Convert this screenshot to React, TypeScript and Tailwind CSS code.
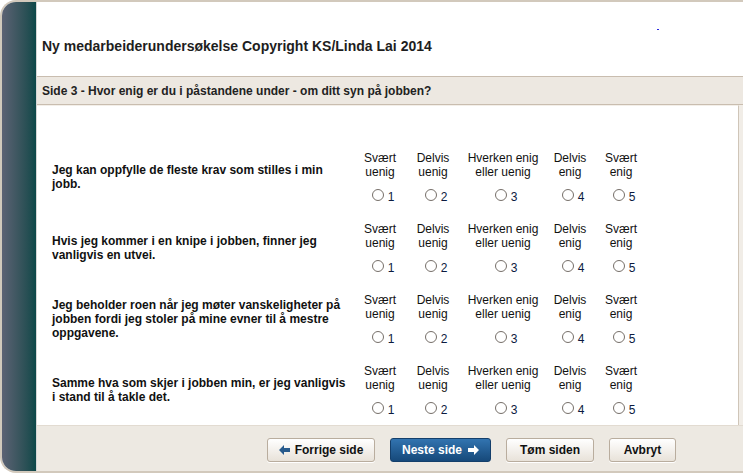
import React from 'react'

const questions = [
  'Jeg kan oppfylle de fleste krav som stilles i min jobb.',
  'Hvis jeg kommer i en knipe i jobben, finner jeg vanligvis en utvei.',
  'Jeg beholder roen når jeg møter vanskeligheter på jobben fordi jeg stoler på mine evner til å mestre oppgavene.',
  'Samme hva som skjer i jobben min, er jeg vanligvis i stand til å takle det.',
]

const options = [
  { top: 'Svært', bottom: 'uenig', w: 'w-[54px]' },
  { top: 'Delvis', bottom: 'uenig', w: 'w-[52px]' },
  { top: 'Hverken enig', bottom: 'eller uenig', w: 'w-[88px]' },
  { top: 'Delvis', bottom: 'enig', w: 'w-[46px]' },
  { top: 'Svært', bottom: 'enig', w: 'w-[56px]' },
]

function Arrow({ dir, color }: { dir: 'left' | 'right'; color: string }) {
  return (
    <svg width="11" height="10" viewBox="0 0 11 10" className={dir === 'right' ? 'rotate-180' : ''}>
      <path d="M0 5 L5 0 L5 3 L11 3 L11 7 L5 7 L5 10 Z" fill={color} />
    </svg>
  )
}

function LightButton({ children, w }: { children: React.ReactNode; w: string }) {
  return (
    <button className={`${w} h-[24px] flex items-center justify-center gap-[5px] rounded-[3px] border border-[#b9ad9e] bg-linear-to-b from-white to-[#e8e2d9] text-[12px] font-bold text-[#111] shadow-[0_1px_0_#fff]`}>
      {children}
    </button>
  )
}

export default function App() {
  return (
    <div className="w-[743px] h-[476px] bg-white overflow-hidden font-['Liberation_Sans',Arial,sans-serif]">
      <div className="flex h-[473px] border-t-2 border-b-2 border-l-2 border-[#d2c9bc] rounded-l-[16px] overflow-hidden">
        {/* left strip */}
        <div className="w-[35px] shrink-0 bg-linear-to-r from-[#5c6274] to-[#0b4849] border-r border-[#d6d6d6]" />

        <div className="flex-1 flex flex-col min-w-0">
          {/* header */}
          <div className="relative h-[74px] bg-white pl-[5px] pt-[35px]">
            <h1 className="text-[14px] leading-[18px] font-bold text-[#1e1e1e]">
              Ny medarbeiderundersøkelse Copyright KS/Linda Lai 2014
            </h1>
            <span className="absolute left-[620px] top-[27px] w-[2px] h-[1px] bg-[#2a2ae0]" />
          </div>

          {/* section bar */}
          <div className="h-[29px] flex items-center pl-[5px] bg-[#ede8e1] border-y border-[#c9bdaf]">
            <span className="text-[12px] font-bold text-[#222]">
              Side 3 - Hvor enig er du i påstandene under - om ditt syn på jobben?
            </span>
          </div>

          {/* content */}
          <div className="h-[320px] flex bg-[#f1ede7]">
            <div className="flex-1 bg-white border-r border-[#cfc5b8] mr-[4px] pt-[45px] pl-[15px] border-t border-t-[#f3efe9]">
              {questions.map((q, i) => (
                <div key={i} className="flex h-[71px]">
                  <div className="w-[301px] h-[52px] pr-[6px] flex items-center">
                    <p className="text-[12px] leading-[14px] font-bold text-[#111]">{q}</p>
                  </div>
                  {options.map((o, j) => (
                    <div key={j} className={`${o.w} flex flex-col items-center`}>
                      <div className="text-[12px] leading-[14px] text-center text-[#111] whitespace-nowrap">
                        <div>{o.top}</div>
                        <div>{o.bottom}</div>
                      </div>
                      <div className="mt-[9px] pl-[6px] h-[14px] flex items-center gap-[4px]">
                        <span className="w-[12px] h-[12px] rounded-full border border-[#766f69] bg-white" />
                        <span className="text-[12px] leading-[14px] text-[#0c1a40] mt-[3px]">{j + 1}</span>
                      </div>
                    </div>
                  ))}
                </div>
              ))}
            </div>
          </div>

          {/* footer */}
          <div className="h-[46px] bg-[#ede9e2] border-t border-[#e2dbd1] pt-[12px] pl-[230px] flex gap-[15px] items-start">
            <LightButton w="w-[108px]">
              <Arrow dir="left" color="#275a8c" />
              <span>Forrige side</span>
            </LightButton>
            <button className="w-[101px] h-[24px] flex items-center justify-center gap-[6px] rounded-[3px] border border-[#143f6b] bg-linear-to-b from-[#3274b0] to-[#16497a] text-[12px] font-bold text-white">
              <span>Neste side</span>
              <Arrow dir="right" color="#ffffff" />
            </button>
            <LightButton w="w-[88px]">
              <span>Tøm siden</span>
            </LightButton>
            <LightButton w="w-[67px]">
              <span>Avbryt</span>
            </LightButton>
          </div>
        </div>
      </div>
    </div>
  )
}
